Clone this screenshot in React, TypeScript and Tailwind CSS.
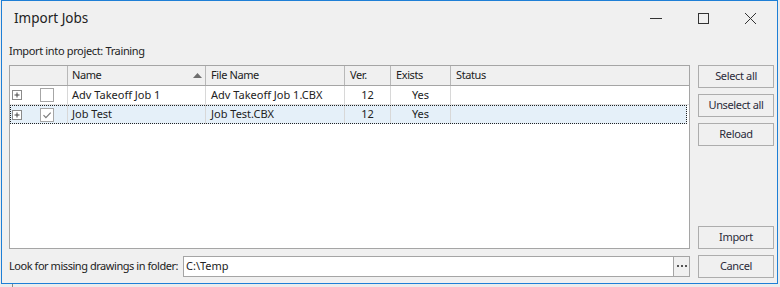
import React from "react";

const font = "font-['Noto_Sans',sans-serif]";

function Btn({ label }: { label: string }) {
  return (
    <div className="w-[76px] h-[23px] border border-[#adadad] bg-[#f0f0f0] flex items-center justify-center text-[11px] tracking-[-0.35px] text-[#2b2b3a] whitespace-nowrap">
      {label}
    </div>
  );
}

function Expand() {
  return (
    <svg width="10" height="10" viewBox="0 0 10 10" className="block">
      <rect x="0.5" y="0.5" width="9" height="9" fill="#fff" stroke="#8a8a8a" />
      <path d="M2.5 5h5M5 2.5v5" stroke="#444" strokeWidth="1" />
    </svg>
  );
}

function Check({ checked }: { checked: boolean }) {
  return (
    <svg width="14" height="14" viewBox="0 0 14 14" className="block">
      <rect x="0.5" y="0.5" width="13" height="13" fill="#fff" stroke="#a6a6a6" />
      {checked && <path d="M3.5 7.2l2.4 2.4 4.8-5" fill="none" stroke="#7a7a7a" strokeWidth="1.2" />}
    </svg>
  );
}

const cols = [
  { w: "w-[58px]", label: "" },
  { w: "w-[138px]", label: "Name" },
  { w: "w-[139px]", label: "File Name" },
  { w: "w-[46px]", label: "Ver." },
  { w: "w-[60px]", label: "Exists" },
];

function Row({ name, file, checked, selected }: { name: string; file: string; checked: boolean; selected?: boolean }) {
  return (
    <div
      className={`flex h-[19px] items-center text-[11px] text-[#222] whitespace-nowrap ${
        selected ? "bg-[#e5f0f9] outline outline-1 outline-dotted outline-[#222] -outline-offset-1 mr-[2px]" : "border-b border-[#e2e2e2]"
      }`}
    >
      <div className="w-[58px] h-full flex items-center border-r border-[#d8d8d8]">
        <div className="ml-[2px]"><Expand /></div>
        <div className="ml-[18px]"><Check checked={checked} /></div>
      </div>
      <div className="w-[138px] h-full flex items-center pl-[4px] border-r border-[#d8d8d8]">{name}</div>
      <div className="w-[139px] h-full flex items-center pl-[5px] border-r border-[#d8d8d8]">{file}</div>
      <div className="w-[46px] h-full flex items-center justify-center border-r border-[#d8d8d8]">12</div>
      <div className="w-[60px] h-full flex items-center justify-center border-r border-[#d8d8d8]">Yes</div>
      <div className="flex-1 h-full" />
    </div>
  );
}

export default function App() {
  return (
    <div className={`w-[780px] h-[287px] bg-[#ececec] ${font} flex flex-col`}>
      <div className="flex">
        <div className="w-[1px]" />
        <div className="w-[777px] h-[284px] border border-[#1e7fd6] bg-[#f0f0f0] flex flex-col">
          {/* Title bar */}
          <div className="h-[35px] flex items-center">
            <div className="pl-[12px] text-[13.5px] text-[#222] flex-1 pb-[1px] whitespace-nowrap">Import Jobs</div>
            <svg width="120" height="35" viewBox="0 0 120 35" className="block mr-[14px]">
              <path d="M7 17.5h12" stroke="#333" strokeWidth="1" />
              <rect x="55.5" y="12.5" width="10" height="10" fill="none" stroke="#333" strokeWidth="1" />
              <path d="M102 12l11 11M113 12l-11 11" stroke="#333" strokeWidth="1" />
            </svg>
          </div>
          {/* Project label */}
          <div className="h-[29px] flex items-center pl-[7px] pt-[1px] text-[11px] tracking-[-0.35px] text-[#222] whitespace-nowrap">Import into project: Training</div>
          {/* Main */}
          <div className="flex h-[184px]">
            <div className="ml-[7px] w-[681px] h-full border border-[#a5a5a5] bg-white flex flex-col">
              <div className="flex h-[20px] bg-[#f0f0f0] border-b border-[#a5a5a5] text-[11px] tracking-[-0.4px] text-[#222] whitespace-nowrap">
                {cols.map((c, i) => (
                  <div key={i} className={`${c.w} h-full flex items-center border-r border-[#b8b8b8] ${i === 1 ? "pl-[4px] justify-between pr-[3px]" : i === 0 ? "" : "pl-[5px]"}`}>
                    <span>{c.label}</span>
                    {i === 1 && (
                      <svg width="9" height="5" viewBox="0 0 9 5" className="block">
                        <path d="M0 5L4.5 0L9 5Z" fill="#6e6e6e" />
                      </svg>
                    )}
                  </div>
                ))}
                <div className="flex-1 h-full flex items-center pl-[5px]">Status</div>
              </div>
              <Row name="Adv Takeoff Job 1" file="Adv Takeoff Job 1.CBX" checked={false} />
              <Row name="Job Test" file="Job Test.CBX" checked={true} selected />
            </div>
            <div className="ml-[8px] flex flex-col h-full">
              <div className="flex flex-col gap-[6px]">
                <Btn label="Select all" />
                <Btn label="Unselect all" />
                <Btn label="Reload" />
              </div>
              <div className="flex-1" />
              <Btn label="Import" />
            </div>
          </div>
          {/* Bottom row */}
          <div className="flex items-center h-[23px] mt-[6px]">
            <div className="w-[181px] pl-[7px] text-[11px] tracking-[-0.45px] text-[#222] whitespace-nowrap">Look for missing drawings in folder:</div>
            <div className="w-[507px] h-[21px] border border-[#a5a5a5] bg-white flex">
              <div className="flex-1 flex items-center pl-[2px] text-[11px] text-[#222]">C:\Temp</div>
              <div className="w-[16px] h-full border-l border-[#a5a5a5] bg-[#f0f0f0] flex items-center justify-center">
                <svg width="10" height="3" viewBox="0 0 10 3" className="block">
                  <rect x="0" y="0" width="2" height="2" fill="#555" />
                  <rect x="4" y="0" width="2" height="2" fill="#555" />
                  <rect x="8" y="0" width="2" height="2" fill="#555" />
                </svg>
              </div>
            </div>
            <div className="ml-[8px]"><Btn label="Cancel" /></div>
          </div>
        </div>
      </div>
      <div className="flex flex-1">
        <div className="ml-[12px] w-[1px] h-full bg-[#8a8a8a]" />
      </div>
    </div>
  );
}
